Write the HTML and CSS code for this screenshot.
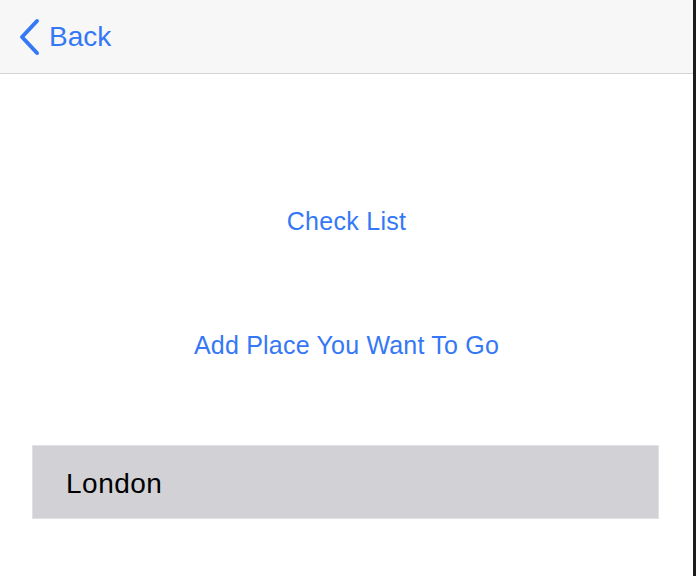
FILE: index.html
```html
<!DOCTYPE html>
<html>
<head>
<meta charset="utf-8">
<link rel="stylesheet" href="styles.css">
</head>
<body>
<div class="app">
  <div class="screen">
    <header class="nav">
      <a class="back">
        <svg class="chev" width="22" height="38" viewBox="0 0 22 38"><path d="M19 3 L4 19 L19 35" fill="none" stroke="#3478f6" stroke-width="4" stroke-linecap="round" stroke-linejoin="round"/></svg>
        <span class="back-label">Back</span>
      </a>
    </header>
    <main class="content">
      <div class="link check">Check List</div>
      <div class="link add">Add Place You Want To Go</div>
      <div class="row">London</div>
    </main>
  </div>
  <div class="edge"></div>
</div>
</body>
</html>
```
FILE: styles.css
```css
html, body {
  margin: 0;
  padding: 0;
  background: #ffffff;
}
body {
  font-family: "Liberation Sans", Arial, sans-serif;
}
.app {
  display: flex;
  width: 696px;
  height: 576px;
  overflow: hidden;
}
.screen {
  flex: 1;
  display: flex;
  flex-direction: column;
  background: #ffffff;
}
.edge {
  width: 3px;
  background: #1c1c1c;
}
.nav {
  height: 73px;
  background: #f7f7f7;
  border-bottom: 1px solid #d4d4d4;
  display: flex;
  align-items: center;
  padding-left: 18px;
}
.back {
  display: flex;
  align-items: center;
  color: #3478f6;
}
.chev {
  display: block;
  margin-right: 9px;
  margin-top: 1px;
}
.back-label {
  font-size: 28px;
  line-height: 34px;
}
.content {
  display: flex;
  flex-direction: column;
  align-items: center;
  padding-top: 132px;
}
.link {
  color: #3478f6;
  font-size: 25px;
  line-height: 30px;
  letter-spacing: 0.2px;
  text-align: center;
}
.check {
  letter-spacing: 0.3px;
}
.add {
  margin-top: 94px;
}
.row {
  align-self: flex-start;
  box-sizing: border-box;
  margin-top: 85px;
  margin-left: 32px;
  width: 627px;
  height: 74px;
  padding: 21px 0 0 33px;
  background: #d1d1d6;
  border: 1px solid #e1e1e4;
  font-size: 28px;
  line-height: 34px;
  letter-spacing: 0.5px;
  color: #000000;
}
```
